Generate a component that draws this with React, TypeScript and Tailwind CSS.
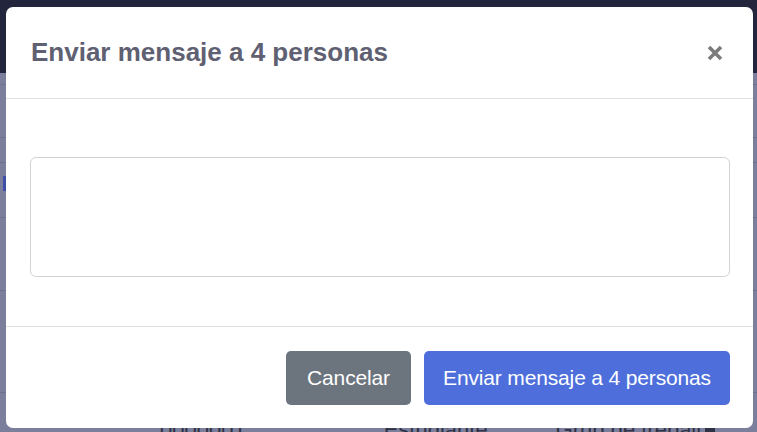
import React from 'react';

const rows = [
  'h-[12px]',
  'h-[53px]',
  'h-[25px]',
  'h-[42px]',
  'h-[73px]',
  'h-[102px]',
];

export default function App() {
  return (
    <div className="relative h-[432px] w-[757px] overflow-hidden bg-[#7b7f9b] font-['Liberation_Sans',Arial,sans-serif]">
      {/* page behind the dialog */}
      <div className="h-[73px] bg-[#22253b]" />
      {rows.map((h, i) => (
        <div key={i} className={`${h} border-b border-[#6c7090]`}>
          {i === 3 && <div className="ml-[3px] mt-[13px] h-[15px] w-[3px] bg-[#3f4fa8]" />}
        </div>
      ))}
      <div className="flex items-center pt-[20px] text-[22px] text-[#2f3244]">
        <span className="ml-[160px]">0000001</span>
        <span className="ml-[138px]">Estudiante</span>
        <span className="ml-[68px]">Grup de treball</span>
        <span className="ml-[4px] h-[12px] w-[10px] bg-[#2f3244]" />
      </div>

      {/* dialog */}
      <div className="absolute left-[6px] top-[7px] flex h-[421px] w-[747px] flex-col rounded-[7px] bg-white">
        <div className="flex h-[92px] shrink-0 items-center justify-between border-b border-[#dee2e6] pl-[25px] pr-[29px]">
          <h2 className="text-[26px] font-bold text-[#5f6072]">Enviar mensaje a 4 personas</h2>
          <button className="flex h-[18px] w-[18px] items-center justify-center">
            <svg width="16" height="16" viewBox="0 0 16 16">
              <path d="M2 2 L14 14 M14 2 L2 14" stroke="#7b7b7b" strokeWidth="3.6" strokeLinecap="butt" />
            </svg>
          </button>
        </div>
        <div className="h-[227px] shrink-0 pl-[24px] pr-[23px] pt-[58px]">
          <textarea className="block h-[120px] w-full resize-none rounded-[6px] border border-[#d0d3d8] outline-none" />
        </div>
        <div className="flex justify-end gap-[13px] border-t border-[#dee2e6] pr-[23px] pt-[24px]">
          <button className="h-[54px] w-[125px] rounded-[5px] bg-[#6c757d] text-[21px] tracking-[-0.15px] text-white">Cancelar</button>
          <button className="h-[54px] w-[306px] rounded-[5px] bg-[#4e6fdb] text-[21px] tracking-[-0.15px] text-white">Enviar mensaje a 4 personas</button>
        </div>
      </div>
    </div>
  );
}
